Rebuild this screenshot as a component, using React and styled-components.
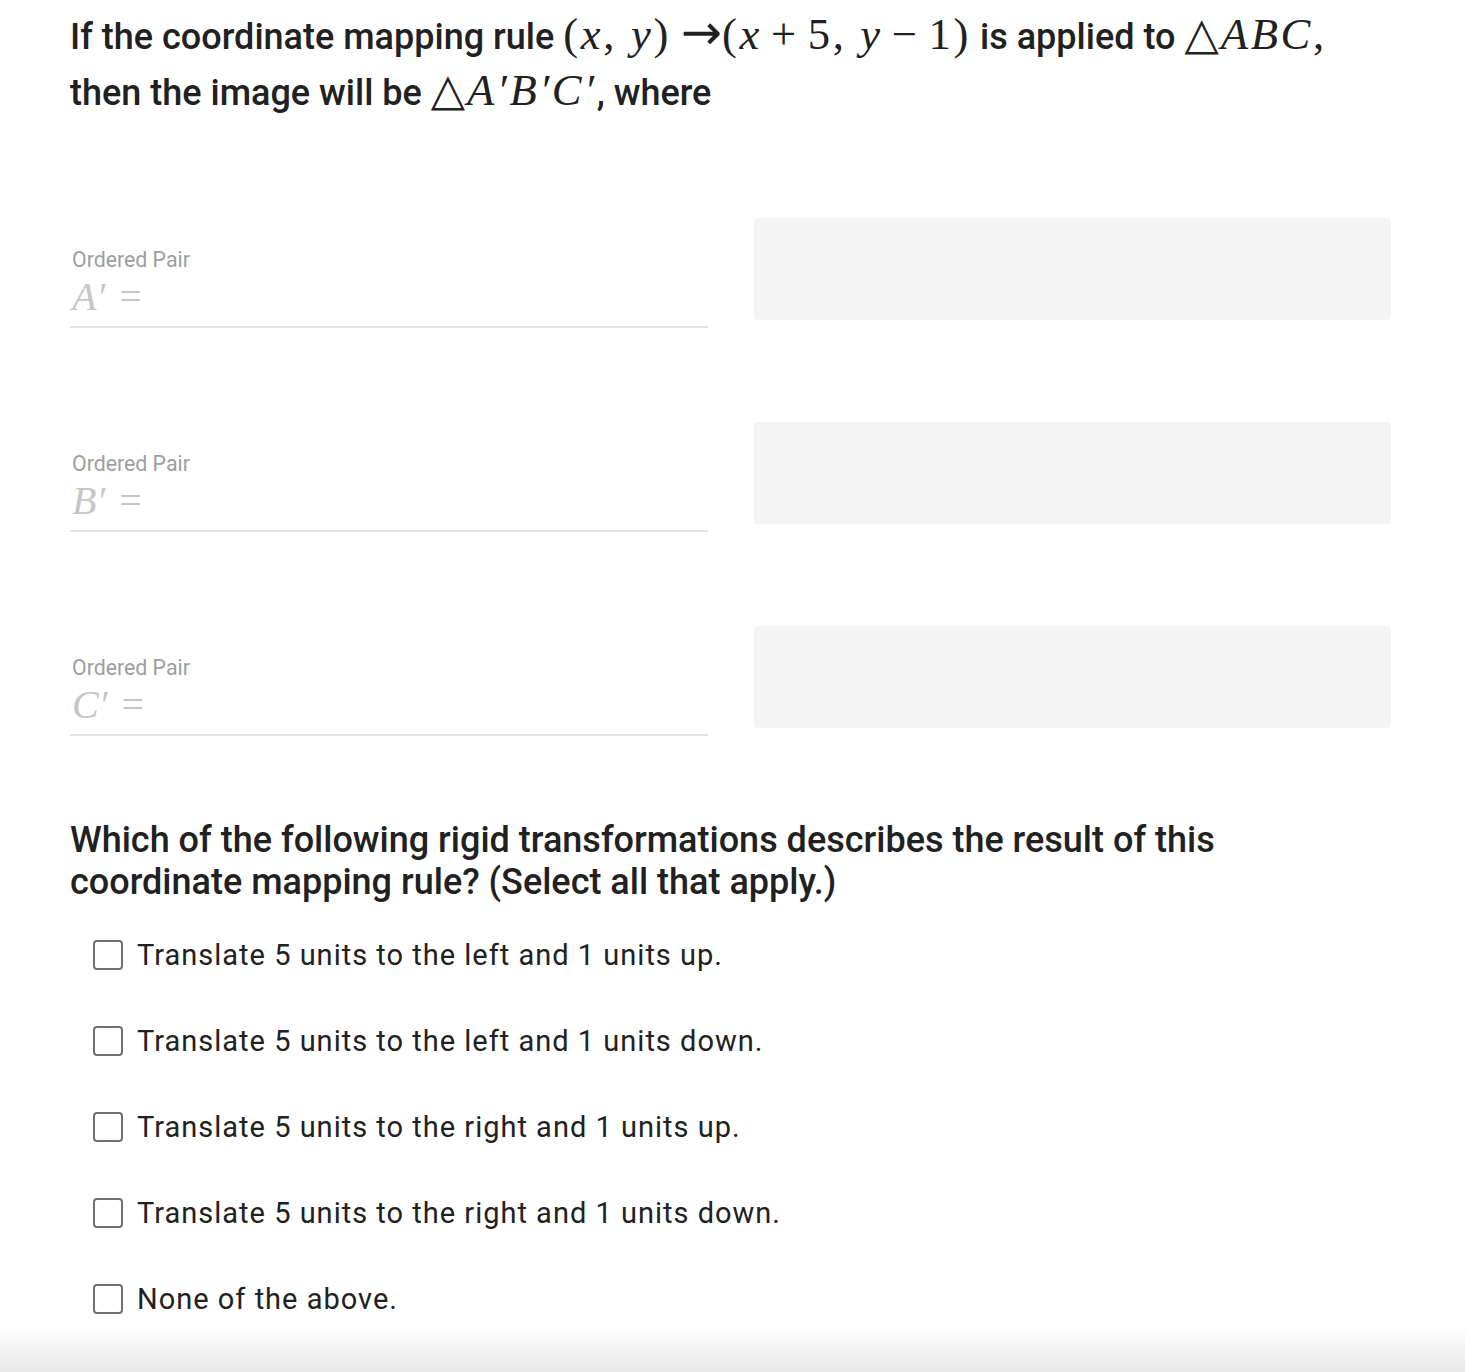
import React from "react";
import styled, { createGlobalStyle } from "styled-components";

const Global = createGlobalStyle`
  html, body { margin: 0; padding: 0; background: #ffffff; }
  body { font-family: Roboto, "Liberation Sans", sans-serif; color: #212121; }
`;

const Page = styled.main`
  padding: 8px 0 60px 70px;
  width: 1322px;
`;

const Prompt = styled.h2`
  margin: 0;
  font-size: 36px;
  font-weight: 500;
  line-height: 56px;
  color: #212121;
`;

const M = styled.span`
  font-family: "Liberation Serif", "DejaVu Serif", serif;
  font-style: italic;
  font-weight: 400;
  font-size: 1.24em;
  line-height: 1;
  letter-spacing: 0.06em;
`;

const Up = styled.span`
  font-style: normal;
`;

const Op = styled.span`
  font-style: normal;
  margin: 0 0.2em;
`;

const Arrow = styled.span`
  font-style: normal;
  font-family: "DejaVu Sans", sans-serif;
  font-size: 1.1em;
  line-height: 1;
  letter-spacing: 0;
  margin: 0 0 0 0.2em;
`;

const Tri = styled.span`
  font-style: normal;
  font-family: "DejaVu Sans", sans-serif;
  font-size: 1em;
  margin-right: 2px;
  letter-spacing: 0;
`;

const Rows = styled.div`
  margin-top: 97px;
  display: flex;
  flex-direction: column;
  gap: 94px;
`;

const Row = styled.div`
  display: grid;
  grid-template-columns: 638px 637px;
  column-gap: 46px;
  align-items: start;
  height: 110px;
`;

const Field = styled.div`
  height: 110px;
  display: flex;
  flex-direction: column;
  justify-content: flex-end;
  padding-left: 2px;
  padding-bottom: 8px;
  border-bottom: 2px solid #e3e3e3;
  box-sizing: border-box;
`;

const Label = styled.div`
  font-size: 21.3px;
  line-height: 24px;
  color: #9e9e9e;
  margin-bottom: 4px;
`;

const FieldMath = styled.div`
  height: 42px;
  line-height: 42px;
  font-family: "Liberation Serif", "DejaVu Serif", serif;
  font-size: 40px;
  color: #c6c6c6;
`;

const Eq = styled.span`
  margin-left: 14px;
`;

const Answer = styled.div`
  height: 102px;
  background: #f4f4f4;
  border-radius: 4px;
`;

const Question = styled.h2`
  margin: 83px 0 0;
  font-size: 36px;
  font-weight: 500;
  line-height: 42px;
  color: #212121;
  width: 1200px;
`;

const Options = styled.ul`
  list-style: none;
  margin: 32px 0 0;
  padding: 0 0 0 23px;
  display: flex;
  flex-direction: column;
  gap: 46px;
`;

const Option = styled.li`
  display: flex;
  align-items: center;
  gap: 14px;
  height: 40px;
  font-size: 29px;
  letter-spacing: 1px;
  color: #212121;
`;

const Box = styled.span`
  width: 30px;
  height: 30px;
  box-sizing: border-box;
  border: 2px solid #6f6f6f;
  border-radius: 4px;
  flex: none;
`;

const Fade = styled.div`
  position: fixed;
  left: 0;
  right: 0;
  bottom: 0;
  height: 46px;
  background: linear-gradient(to bottom, rgba(255,255,255,0), #e8e8e8);
  pointer-events: none;
`;

const pairs = ["A", "B", "C"];
const options = [
  "Translate 5 units to the left and 1 units up.",
  "Translate 5 units to the left and 1 units down.",
  "Translate 5 units to the right and 1 units up.",
  "Translate 5 units to the right and 1 units down.",
  "None of the above.",
];

export default function App() {
  return (
    <>
      <Global />
      <Page>
        <Prompt>
          If the coordinate mapping rule{" "}
          <M>
            <Up>(</Up>x<Up>, </Up>y<Up>)</Up>
            <Arrow>→</Arrow>
            <Up>(</Up>x<Op>+</Op>
            <Up>5, </Up>y<Op>−</Op>
            <Up>1)</Up>
          </M>{" "}
          is applied to{" "}
          <M>
            <Tri>△</Tri>ABC<Up>,</Up>
          </M>
          <br />
          then the image will be{" "}
          <M>
            <Tri>△</Tri>A′B′C′
          </M>
          , where
        </Prompt>
        <Rows>
          {pairs.map((p) => (
            <Row key={p}>
              <Field>
                <Label>Ordered Pair</Label>
                <FieldMath>
                  <i>{p}′</i>
                  <Eq>=</Eq>
                </FieldMath>
              </Field>
              <Answer />
            </Row>
          ))}
        </Rows>
        <Question>
          Which of the following rigid transformations describes the result of
          this coordinate mapping rule? (Select all that apply.)
        </Question>
        <Options>
          {options.map((o) => (
            <Option key={o}>
              <Box />
              {o}
            </Option>
          ))}
        </Options>
      </Page>
      <Fade />
    </>
  );
}
